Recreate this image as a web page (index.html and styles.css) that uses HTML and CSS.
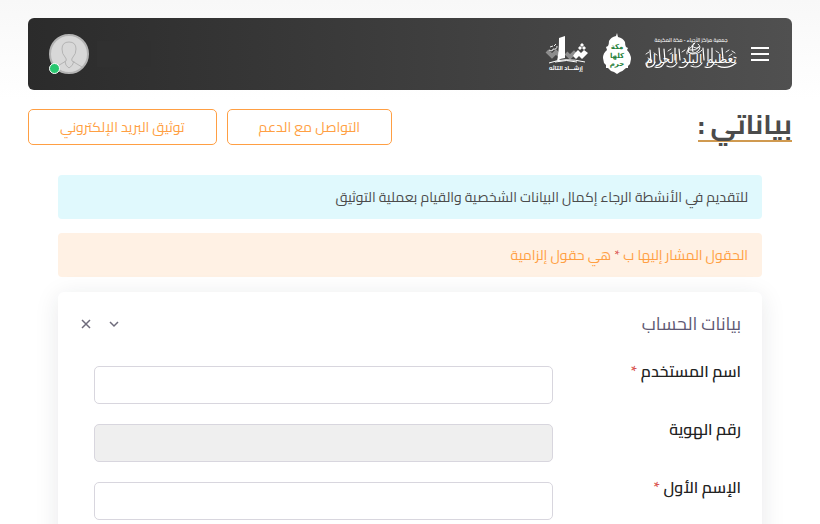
FILE: index.html
```html
<!DOCTYPE html>
<html lang="ar" dir="rtl">
<head>
    <meta charset="UTF-8">
    <meta name="viewport" content="width=device-width, initial-scale=1.0">
    <title>بياناتي</title>
    <link rel="stylesheet" href="styles.css">
</head>
<body>
    <header class="navbar">
        <button class="menu-button" type="button" aria-label="القائمة">
            <svg width="20" height="16" viewBox="0 0 20 16" fill="none" stroke="#fff" stroke-width="2"><path d="M0 2h18M0 8h18M0 14h18"/></svg>
        </button>
        <div class="logos">
            <svg class="logo" width="92" height="36" viewBox="0 0 92 36" fill="#fff">
                <text class="logo-text" x="46" y="6" font-size="5" font-weight="600" text-anchor="middle">جمعية مراكز الأحياء - مكة المكرمة</text>
                <text class="logo-script" x="46" y="27" font-size="12" text-anchor="middle">تعظيم البلد الحرام</text>
                <g fill="none" stroke="#fff" stroke-linecap="round" stroke-width="1.2">
                    <path d="M1 27q0 5 4 4 4-1 5-5M10 31q6 2 9-4M22 30q6 3 10-3M34 31q6 2 9-4M46 30q7 3 11-3M60 31q6 2 9-4M73 30q9 4 18-3"/>
                    <path d="M5 14l1 12M14 12l1 12M19 13l1 12M30 12v12M34 13l1 11M58 12l1 12M63 13v12M67 12v12M77 12l1 12"/>
                    <path d="M42 18q-1-5 4-4t8-3M43 14q5-4 7-7M47 10q5 4 7 1M49 7q-3 3-1 9M53 8q4 3 0 7-5 4-10 1M44 11q-3 5 3 7 7 0 10-4" stroke-width="1"/>
                    <path d="M1 18l3-2M9 17l3 2M23 15l3-2M25 18l2-1M37 16l3-2M71 15l3 2M81 16l3-2M87 15l3 2M84 20l3-2M3 22l2 1M89 21l2 1" stroke-width=".9"/>
                </g>
            </svg>
            <svg class="logo" width="30" height="42" viewBox="0 0 30 42">
                <path fill="#fff" d="M15 0l1 4q5 1 7 5 0 3 1 5l2 1-1 2q4 4 4 9l-1 5-2 2v2h-2q-3 3-6 4l-3 2-3-2q-4-1-6-4H4v-3l-2-2-1-5q0-5 4-8l-1-3 2-1q1-2 1-5 2-4 7-5z"/>
                <g class="logo-script" fill="#26813b" font-size="7" font-weight="bold" text-anchor="middle">
                    <text x="15" y="16">مكة</text>
                    <text x="15" y="25">كلها</text>
                    <text x="15" y="33">حرم</text>
                </g>
            </svg>
            <svg class="logo" width="44" height="38" viewBox="0 0 44 38">
                <path fill="none" stroke="#8d8d8d" stroke-width="4" d="M2 16l5 5 4-4 5 5M21 18l4 4 4-4 3 3"/>
                <path fill="#fff" d="M14 3l6-2v22q-4 0-8 3 2-8 2-23zM30 18l3-3 3 3 3-3 4 3-6 6-3-3-3 3-3-3zM33 13l2-2 2 2-2 2zM37 13l2-2 2 2-2 2zM35 10l2-2 2 2-2 2z"/>
                <path fill="none" stroke="#fff" d="M4 28q16-6 36-1M10 27q12-3 22 0"/>
                <path fill="none" stroke="#fff" stroke-width=".9" d="M4 15q4 2 4-1 4 1 4-3M5 12l3-1M9 11l2-2"/>
                <text class="logo-text" fill="#fff" x="21" y="35" font-size="6" font-weight="bold" text-anchor="middle">إرشـــاد التائه</text>
            </svg>
        </div>
        <div class="user">
            <span class="user-name"></span>
            <span class="avatar">
                <svg width="40" height="40" viewBox="0 0 40 40">
                    <circle cx="20" cy="20" r="19" fill="#d8d8d8" stroke="#b4b4b4" stroke-width="2"/>
                    <path fill="none" stroke="#b4b4b4" d="M7 33l10-6q1-2-1-4-3-3-3-8 0-7 7-7t7 7q0 5-3 8-2 2-1 4l10 6M16 27q0 5 4 7 4-2 5-7"/>
                </svg>
                <span class="status"></span>
            </span>
        </div>
    </header>

    <main>
        <div class="page-head">
            <h1>بياناتي :</h1>
            <div class="actions">
                <button class="btn" type="button">التواصل مع الدعم</button>
                <button class="btn" type="button">توثيق البريد الإلكتروني</button>
            </div>
        </div>

        <div class="content">
            <p class="alert alert-info">للتقديم في الأنشطة الرجاء إكمال البيانات الشخصية والقيام بعملية التوثيق</p>
            <p class="alert alert-warning">الحقول المشار إليها ب <span class="required">*</span> هي حقول إلزامية</p>

            <form class="card">
                <div class="card-header">
                    <h2>بيانات الحساب</h2>
                    <div class="card-tools">
                        <button type="button" aria-label="طي">
                            <svg width="14" height="14" viewBox="0 0 14 14" fill="none" stroke="#6e6b7b" stroke-width="1.5"><path d="M3 5l4 4 4-4"/></svg>
                        </button>
                        <button type="button" aria-label="إغلاق">
                            <svg width="14" height="14" viewBox="0 0 14 14" fill="none" stroke="#6e6b7b" stroke-width="1.5"><path d="M3 3l8 8M11 3l-8 8"/></svg>
                        </button>
                    </div>
                </div>
                <div class="form-row">
                    <label for="username">اسم المستخدم <span class="required">*</span></label>
                    <input type="text" id="username">
                </div>
                <div class="form-row">
                    <label for="idNumber">رقم الهوية</label>
                    <input type="text" id="idNumber" disabled>
                </div>
                <div class="form-row">
                    <label for="firstName">الإسم الأول <span class="required">*</span></label>
                    <input type="text" id="firstName">
                </div>
            </form>
        </div>
    </main>
</body>
</html>
```
FILE: styles.css
```css
* {
    margin: 0;
    padding: 0;
    box-sizing: border-box;
}
body {
    font-family: "Cairo", "DejaVu Sans", sans-serif;
    font-size: 14px;
    color: #4b4b4b;
    background: linear-gradient(#f8f8f8, #fff 100px) no-repeat #fff;
    padding: 18px 28px 0;
}
button {
    font-family: inherit;
    background: none;
    border: none;
    cursor: pointer;
}
.navbar {
    display: flex;
    align-items: center;
    height: 72px;
    padding: 0 21px;
    border-radius: 6px;
    background: linear-gradient(to left, #505050, #2b2b2b);
}
.menu-button,
.logos,
.user,
.card-tools,
.card-tools button {
    display: flex;
    align-items: center;
}
.logos {
    gap: 13px;
    margin-right: 14px;
}
.logo {
    overflow: visible;
}
.logo-text {
    font-family: "Cairo", "DejaVu Sans", sans-serif;
}
.logo-script {
    font-family: "DejaVu Sans", sans-serif;
}
.user {
    gap: 8px;
    margin-right: auto;
}
.user-name {
    width: 54px;
    height: 26px;
    background: #303030;
}
.avatar {
    display: flex;
    position: relative;
}
.status {
    position: absolute;
    left: 0;
    bottom: 0;
    width: 11px;
    height: 11px;
    border: 1px solid #fff;
    border-radius: 50%;
    background: #28c76f;
}
.page-head {
    display: flex;
    justify-content: space-between;
    align-items: flex-start;
    padding-top: 19px;
}
h1 {
    font-size: 27px;
    line-height: 31px;
    border-bottom: 2px solid #d09a50;
}
.actions {
    display: flex;
    gap: 10px;
}
.btn {
    height: 36px;
    padding: 0 31px;
    border: 1px solid #ff9f43;
    border-radius: 5px;
    color: #ff9f43;
    font-size: 14px;
}
.content {
    padding: 30px 30px 0;
}
.alert {
    margin-bottom: 14px;
    padding: 11px 14px;
    border-radius: 4px;
    line-height: 22px;
}
.alert-info {
    background: #e0f9fd;
}
.alert-warning {
    background: #fff1e4;
    color: #ff9f43;
}
.required {
    color: #d9534f;
}
.card {
    margin-top: 15px;
    padding: 21px;
    border-radius: 6px;
    background: #fff;
    box-shadow: 0 4px 24px rgba(34, 41, 47, .1);
}
.card-header {
    display: flex;
    justify-content: space-between;
    align-items: center;
    margin-bottom: 31px;
}
h2 {
    font-size: 18px;
    font-weight: 400;
    line-height: 22px;
    color: #5e5873;
}
.card-tools {
    gap: 14px;
}
.form-row {
    display: flex;
    margin-bottom: 20px;
    padding-left: 15px;
}
.form-row label {
    width: 29%;
    font-size: 16px;
    font-weight: 600;
    line-height: 10px;
    color: #222;
}
.form-row input {
    flex: 1;
    min-width: 0;
    height: 38px;
    padding: 6px 14px;
    border: 1px solid #d8d6de;
    border-radius: 5px;
    background: #fff;
}
.form-row input:disabled {
    background: #efefef;
}
```
